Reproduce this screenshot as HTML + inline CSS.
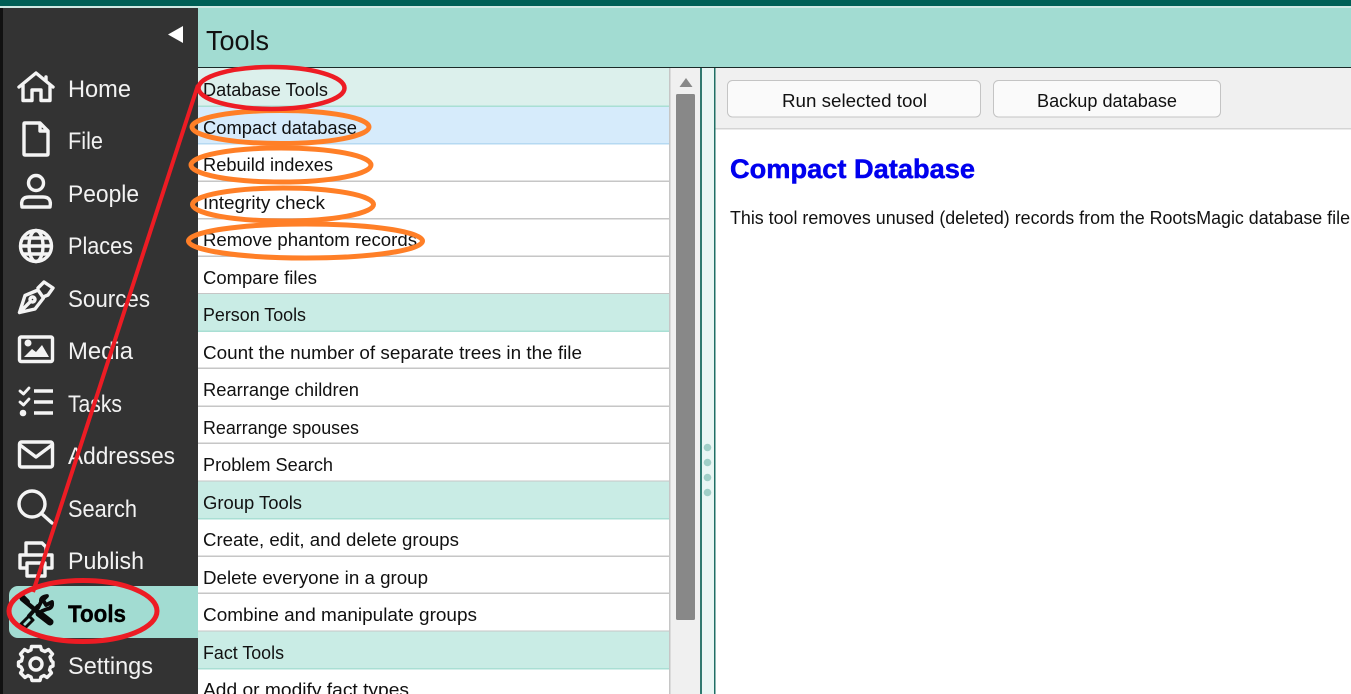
<!DOCTYPE html>
<html><head><meta charset="utf-8"><style>
html,body{margin:0;padding:0;background:#fff;width:1351px;height:694px;overflow:hidden}
svg{display:block}
text{font-family:"Liberation Sans",sans-serif}
.n text{font-size:24px;fill:#f2f2f2}
.r text{font-size:18.6px;fill:#111}
.i{fill:none;stroke:#f4f4f4;stroke-width:3.4;stroke-linejoin:round;stroke-linecap:round}
</style></head><body>
<svg width="1351" height="694" viewBox="0 0 1351 694" xmlns="http://www.w3.org/2000/svg">
<rect x="0" y="0" width="1351" height="694" fill="#fff"/>
<!-- top -->
<rect x="0" y="0" width="1351" height="6" fill="#005f56"/>
<rect x="0" y="6" width="1351" height="2" fill="#cfe9e4"/>
<rect x="198" y="8" width="1153" height="59" fill="#a2dcd2"/>
<rect x="198" y="67" width="1153" height="1.5" fill="#1a2a28"/>
<text x="206" y="50" font-size="28" fill="#111" textLength="63" lengthAdjust="spacingAndGlyphs">Tools</text>
<!-- sidebar -->
<rect x="0" y="8" width="3" height="686" fill="#111"/>
<rect x="3" y="8" width="195" height="686" fill="#333"/>
<path d="M168 34.500 L183 26 V43 Z" fill="#fff"/>
<rect x="9" y="586" width="189" height="52" rx="9" fill="#a2dcd2"/>
<rect x="100" y="586" width="98" height="52" fill="#a2dcd2"/>
<g class="n">
<text x="68" y="97" textLength="63" lengthAdjust="spacingAndGlyphs">Home</text>
<text x="68" y="149" textLength="35" lengthAdjust="spacingAndGlyphs">File</text>
<text x="68" y="202" textLength="71" lengthAdjust="spacingAndGlyphs">People</text>
<text x="68" y="254" textLength="65" lengthAdjust="spacingAndGlyphs">Places</text>
<text x="68" y="307" textLength="82" lengthAdjust="spacingAndGlyphs">Sources</text>
<text x="68" y="359" textLength="65" lengthAdjust="spacingAndGlyphs">Media</text>
<text x="68" y="412" textLength="54" lengthAdjust="spacingAndGlyphs">Tasks</text>
<text x="68" y="464" textLength="107" lengthAdjust="spacingAndGlyphs">Addresses</text>
<text x="68" y="517" textLength="69" lengthAdjust="spacingAndGlyphs">Search</text>
<text x="68" y="569" textLength="76" lengthAdjust="spacingAndGlyphs">Publish</text>
<text x="68" y="622" textLength="58" lengthAdjust="spacingAndGlyphs" font-weight="bold" stroke="#000" stroke-width="0.4" style="fill:#000">Tools</text>
<text x="68" y="674" textLength="85" lengthAdjust="spacingAndGlyphs">Settings</text>
</g>
<!-- icons -->
<g class="i">
<path d="M19 87 L36 73 L53 87 M46 77 V81 M23 85 V100.500 H32 V90 H41 V100.500 H50 V85"/>
<path d="M24 124 Q24 123 25 123 H40 L48 131 V154 Q48 155 47 155 H25 Q24 155 24 154 Z M40 124 V131 H47"/>
<circle cx="36" cy="183" r="7.500"/>
<path d="M22 207 Q20 197 29 197 H43 Q52 197 50 207 Z"/>
<circle cx="36" cy="246" r="15.500"/>
<ellipse cx="36" cy="246" rx="7" ry="15.500"/>
<path d="M21 246 H51 M23 238 H49 M23 254 H49"/>
<path d="M19.500 312.500 L25 295.500 L38 290 L43.500 298 L35 309 Z M19.500 312.500 L30 302"/>
<path d="M38 288 L44 282 L53 288 L48 295 L43 297"/>
<circle cx="32.500" cy="299.500" r="2.500"/>
<rect x="19.500" y="337" width="33" height="24.500" rx="1.500"/>
<path d="M20 391 L23.500 394 L29 388 M20 402 L23.500 405 L29 399" stroke-width="2.800"/>
<path d="M34 391 H53 M34 402 H53 M34 413 H53" stroke-width="3.600" stroke-linecap="butt"/>
<rect x="19.500" y="442" width="33" height="25" rx="2"/>
<path d="M20 445 L36 457 L52 445"/>
<circle cx="32" cy="504" r="13"/>
<path d="M42 514 L52 523"/>
<path d="M26 554 V543 H42 L46 547 V554 M26 568 H20 V555 H52 V568 H46 M27 563 H45 V576 H27 Z"/>
<g transform="translate(0 -4)">
<path d="M31.500 650.500 L40.500 650.500 L41.500 654 L45 655.500 L48.500 653.500 L52.500 658 L50 661 L51.500 665 L53 666 V670 L50.500 671 L49.500 674 L51.500 677 L47 681.500 L44 679.500 L41 681 L40 684.500 H32 L31 681 L28 679.500 L25 681.500 L20.500 677 L22.500 674 L21 671 L18.500 670 V666 L21.500 665 L22.500 661 L20.500 658 L24.500 653.500 L28 655.500 L31 654 Z"/>
<circle cx="36" cy="668" r="6"/>
</g>
</g>
<circle cx="28" cy="343" r="3.500" fill="#f4f4f4"/>
<path d="M24 357 L32 349 L36 352 L42 345 L49 357 Z" fill="#f4f4f4"/>
<circle cx="23" cy="413" r="3.300" fill="#f4f4f4"/>
<!-- tools icon -->
<g fill="none" stroke="#0a0a0a" stroke-linecap="round" stroke-linejoin="round">
<path d="M22 599 L50 622" stroke-width="4.500"/>
<path d="M39 613.500 L50 622" stroke-width="7"/>
<path d="M21 596 L27 602" stroke-width="6"/>
<path d="M21 624 L25 628 L33 620 L29 616 Z" stroke-width="3"/>
<path d="M29 616 L38 606" stroke-width="4"/>
<path d="M38 608 L41 602 Q40 597 47 596 L43 600 L46 605 L52 602 Q53 608 47 609 L42 611" stroke-width="3.800"/>
</g>
<!-- list -->
<rect x="198" y="68" width="471" height="626" fill="#fff"/>
<rect x="198" y="68" width="471" height="38" fill="#dcf0ec"/>
<rect x="198" y="105.500" width="471" height="1.500" fill="#a9dfd4"/>
<rect x="198" y="107" width="471" height="37" fill="#d6ebfb"/>
<rect x="198" y="143" width="471" height="1.500" fill="#b5d9f2"/>
<g fill="#c6c6c6">
<rect x="198" y="180.500" width="471" height="1.500"/>
<rect x="198" y="218" width="471" height="1.500"/>
<rect x="198" y="255.500" width="471" height="1.500"/>
<rect x="198" y="367.500" width="471" height="1.500"/>
<rect x="198" y="405.500" width="471" height="1.500"/>
<rect x="198" y="442.500" width="471" height="1.500"/>
<rect x="198" y="555.500" width="471" height="1.500"/>
<rect x="198" y="592.500" width="471" height="1.500"/>
</g>
<g fill="#c9ece5">
<rect x="198" y="294" width="471" height="37"/>
<rect x="198" y="481.500" width="471" height="37"/>
<rect x="198" y="631" width="471" height="37.500"/>
</g>
<g fill="#a9dfd4">
<rect x="198" y="330.500" width="471" height="1.500"/>
<rect x="198" y="518" width="471" height="1.500"/>
<rect x="198" y="668" width="471" height="1.500"/>
</g>
<g fill="#c6c6c6">
<rect x="198" y="293" width="471" height="1"/>
<rect x="198" y="480.500" width="471" height="1"/>
<rect x="198" y="630.500" width="471" height="1"/>
</g>
<g class="r" transform="translate(0 1)">
<text x="203" y="95" textLength="125" lengthAdjust="spacingAndGlyphs">Database Tools</text>
<text x="203" y="133" textLength="154" lengthAdjust="spacingAndGlyphs">Compact database</text>
<text x="203" y="170" textLength="130" lengthAdjust="spacingAndGlyphs">Rebuild indexes</text>
<text x="203" y="208" textLength="122" lengthAdjust="spacingAndGlyphs">Integrity check</text>
<text x="203" y="245" textLength="214" lengthAdjust="spacingAndGlyphs">Remove phantom records</text>
<text x="203" y="283" textLength="114" lengthAdjust="spacingAndGlyphs">Compare files</text>
<text x="203" y="320" textLength="103" lengthAdjust="spacingAndGlyphs">Person Tools</text>
<text x="203" y="358" textLength="379" lengthAdjust="spacingAndGlyphs">Count the number of separate trees in the file</text>
<text x="203" y="395" textLength="156" lengthAdjust="spacingAndGlyphs">Rearrange children</text>
<text x="203" y="433" textLength="156" lengthAdjust="spacingAndGlyphs">Rearrange spouses</text>
<text x="203" y="470" textLength="130" lengthAdjust="spacingAndGlyphs">Problem Search</text>
<text x="203" y="508" textLength="99" lengthAdjust="spacingAndGlyphs">Group Tools</text>
<text x="203" y="545" textLength="256" lengthAdjust="spacingAndGlyphs">Create, edit, and delete groups</text>
<text x="203" y="583" textLength="225" lengthAdjust="spacingAndGlyphs">Delete everyone in a group</text>
<text x="203" y="620" textLength="274" lengthAdjust="spacingAndGlyphs">Combine and manipulate groups</text>
<text x="203" y="658" textLength="81" lengthAdjust="spacingAndGlyphs">Fact Tools</text>
<text x="203" y="695" textLength="206" lengthAdjust="spacingAndGlyphs">Add or modify fact types</text>
</g>
<!-- scrollbar -->
<rect x="669" y="68" width="1.500" height="626" fill="#c6c6c6"/>
<rect x="670.500" y="68" width="29.500" height="626" fill="#f0f0f0"/>
<path d="M686 78 L692.500 87 H679.500 Z" fill="#888"/>
<rect x="676" y="94" width="19" height="526" rx="1.500" fill="#888"/>
<!-- splitter -->
<rect x="700" y="68" width="2" height="626" fill="#2f7a70"/>
<rect x="702" y="68" width="12" height="626" fill="#e9f6f4"/>
<rect x="714" y="68" width="1.500" height="626" fill="#1f6f64"/>
<g fill="#a0cfc7">
<circle cx="707.500" cy="447.500" r="3.800"/>
<circle cx="707.500" cy="462.500" r="3.800"/>
<circle cx="707.500" cy="477.500" r="3.800"/>
<circle cx="707.500" cy="492.500" r="3.800"/>
</g>
<!-- right toolbar -->
<rect x="715.500" y="68" width="635.500" height="61" fill="#f0f0f0"/>
<rect x="715.500" y="128" width="635.500" height="1.500" fill="#d4d4d4"/>
<rect x="727.500" y="80.500" width="253" height="36.500" rx="5" fill="#fafafa" stroke="#c4c4c4"/>
<rect x="993.500" y="80.500" width="227" height="36.500" rx="5" fill="#fafafa" stroke="#c4c4c4"/>
<text x="782" y="107" font-size="18.600" fill="#111" textLength="145" lengthAdjust="spacingAndGlyphs">Run selected tool</text>
<text x="1037" y="107" font-size="18.600" fill="#111" textLength="140" lengthAdjust="spacingAndGlyphs">Backup database</text>
<text x="730" y="178" font-size="26.500" font-weight="bold" fill="#0000ee" stroke="#0000ee" stroke-width="0.5" textLength="245" lengthAdjust="spacingAndGlyphs">Compact Database</text>
<text x="730" y="224" font-size="18.300" fill="#111" textLength="620" lengthAdjust="spacingAndGlyphs">This tool removes unused (deleted) records from the RootsMagic database file</text>
<!-- annotations -->
<g fill="none" stroke="#ff7f27" stroke-width="5">
<ellipse cx="280.500" cy="127" rx="88.500" ry="16.500"/>
<ellipse cx="281" cy="165" rx="90" ry="17"/>
<ellipse cx="283" cy="204.500" rx="90.500" ry="16.500"/>
<ellipse cx="305.500" cy="241" rx="117" ry="17"/>
</g>
<g fill="none" stroke="#ed1c24">
<ellipse cx="271.500" cy="88" rx="73" ry="21" stroke-width="4.500"/>
<ellipse cx="83" cy="611" rx="74" ry="30.500" stroke-width="5"/>
<path d="M198 85 L33 592" stroke-width="4"/>
</g>
</svg>
</body></html>
